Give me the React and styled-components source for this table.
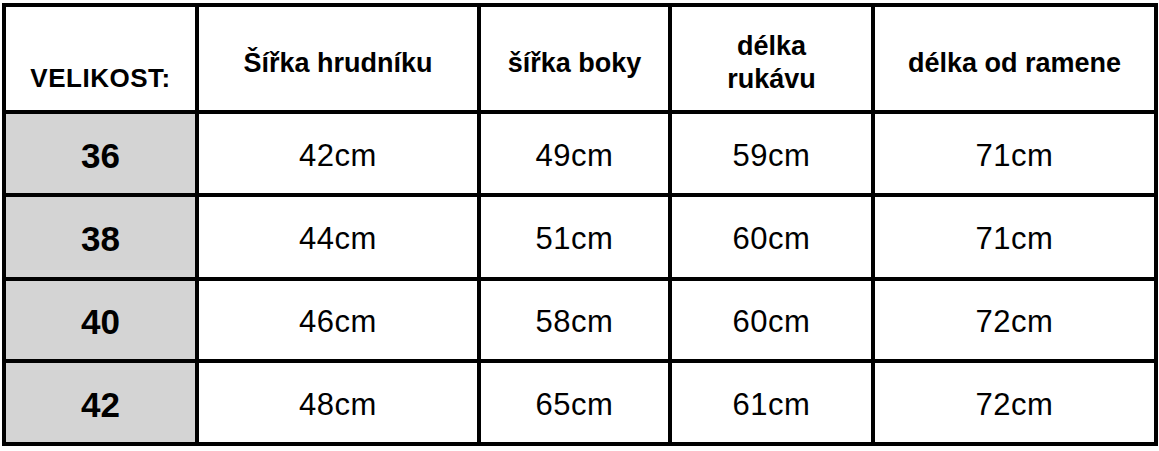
import styled, { createGlobalStyle } from "styled-components";

const GlobalStyle = createGlobalStyle`
    html, body {
        margin: 0;
        padding: 0;
        background: #ffffff;
    }
    body {
        font-family: "Liberation Sans", Arial, Helvetica, sans-serif;
        color: #000000;
    }
`

const headers = ["Šířka hrudníku", "šířka boky", "délka\nrukávu", "délka od ramene"]

const rows = [
    { size: "36", values: ["42cm", "49cm", "59cm", "71cm"] },
    { size: "38", values: ["44cm", "51cm", "60cm", "71cm"] },
    { size: "40", values: ["46cm", "58cm", "60cm", "72cm"] },
    { size: "42", values: ["48cm", "65cm", "61cm", "72cm"] },
]

const App = () => {
    return (
        <>
            <GlobalStyle />
            <Table>
                <CornerCell>VELIKOST:</CornerCell>
                {headers.map((h) => (
                    <HeadCell key={h}>{h}</HeadCell>
                ))}
                {rows.map((row) => (
                    <Row key={row.size}>
                        <SizeCell>{row.size}</SizeCell>
                        {row.values.map((v, i) => (
                            <ValueCell key={i}>{v}</ValueCell>
                        ))}
                    </Row>
                ))}
            </Table>
        </>
    )
}

const Table = styled.div`
    display: grid;
    grid-template-columns: 189px 278px 187px 199px 279px;
    grid-template-rows: 103px 79px 80px 78px 79px;
    gap: 4px;
    padding: 4px;
    margin: 3px 0 0 2px;
    width: max-content;
    background: #000000;
`

const Row = styled.div`
    display: contents;
`

const Cell = styled.div`
    display: flex;
    align-items: center;
    justify-content: center;
    text-align: center;
    background: #ffffff;
`

const CornerCell = styled(Cell)`
    align-items: flex-end;
    padding-bottom: 16px;
    font-size: 26px;
    font-weight: 700;
    letter-spacing: 0.5px;
`

const HeadCell = styled(Cell)`
    white-space: pre-line;
    padding-top: 9px;
    font-size: 27px;
    font-weight: 700;
    line-height: 33px;
`

const SizeCell = styled(Cell)`
    background: #d4d4d4;
    font-size: 35px;
    font-weight: 700;
    padding-top: 4px;
`

const ValueCell = styled(Cell)`
    font-size: 31px;
    letter-spacing: 0.5px;
    padding-top: 4px;
`

export default App;
